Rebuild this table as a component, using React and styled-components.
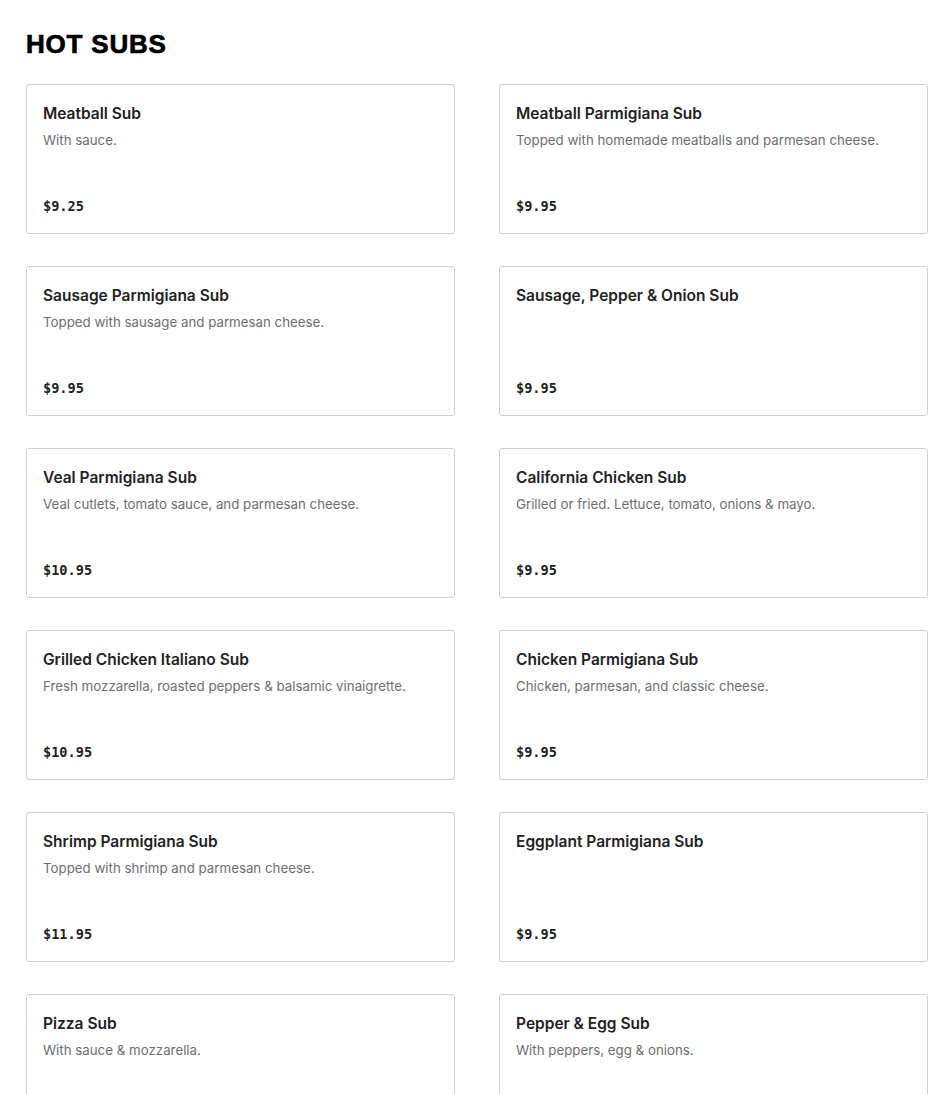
import styled, { createGlobalStyle } from 'styled-components';

const GlobalStyle = createGlobalStyle`
  body {
    margin: 0;
    background: #fff;
    font-family: 'Inter', 'Liberation Sans', sans-serif;
  }
`;

const Page = styled.section`
  padding: 28px 22px 40px 26px;
`;

const Heading = styled.h2`
  margin: 0 0 24px;
  font-family: 'Liberation Sans', Arial, sans-serif;
  font-weight: 900;
  font-size: 26px;
  line-height: 32px;
  letter-spacing: 0.8px;
  color: #000;
  -webkit-text-stroke: 0.7px #000;
`;

const Grid = styled.div`
  display: grid;
  grid-template-columns: 429px 429px;
  column-gap: 44px;
  row-gap: 32px;
`;

const Card = styled.div`
  box-sizing: border-box;
  height: 150px;
  border: 1px solid #cfcfcf;
  border-radius: 3px;
  padding: 18px 16px 18px;
  display: flex;
  flex-direction: column;
`;

const Title = styled.div`
  font-size: 15.5px;
  line-height: 22px;
  font-weight: 600;
  color: #222;
`;

const Desc = styled.div`
  margin-top: 5px;
  font-size: 13.3px;
  line-height: 20px;
  color: #6e6e6e;
`;

const Price = styled.div`
  margin-top: auto;
  font-family: 'DejaVu Sans Mono', 'Liberation Mono', monospace;
  font-weight: 700;
  font-size: 13.6px;
  line-height: 18px;
  color: #222;
`;

const items = [
  ['Meatball Sub', 'With sauce.', '$9.25'],
  ['Meatball Parmigiana Sub', 'Topped with homemade meatballs and parmesan cheese.', '$9.95'],
  ['Sausage Parmigiana Sub', 'Topped with sausage and parmesan cheese.', '$9.95'],
  ['Sausage, Pepper & Onion Sub', '', '$9.95'],
  ['Veal Parmigiana Sub', 'Veal cutlets, tomato sauce, and parmesan cheese.', '$10.95'],
  ['California Chicken Sub', 'Grilled or fried. Lettuce, tomato, onions & mayo.', '$9.95'],
  ['Grilled Chicken Italiano Sub', 'Fresh mozzarella, roasted peppers & balsamic vinaigrette.', '$10.95'],
  ['Chicken Parmigiana Sub', 'Chicken, parmesan, and classic cheese.', '$9.95'],
  ['Shrimp Parmigiana Sub', 'Topped with shrimp and parmesan cheese.', '$11.95'],
  ['Eggplant Parmigiana Sub', '', '$9.95'],
  ['Pizza Sub', 'With sauce & mozzarella.', '$8.95'],
  ['Pepper & Egg Sub', 'With peppers, egg & onions.', '$8.95'],
];

const App = () => (
  <>
    <GlobalStyle />
    <Page>
      <Heading>HOT SUBS</Heading>
      <Grid>
        {items.map(([name, desc, price]) => (
          <Card key={name}>
            <Title>{name}</Title>
            {desc && <Desc>{desc}</Desc>}
            <Price>{price}</Price>
          </Card>
        ))}
      </Grid>
    </Page>
  </>
);

export default App;
